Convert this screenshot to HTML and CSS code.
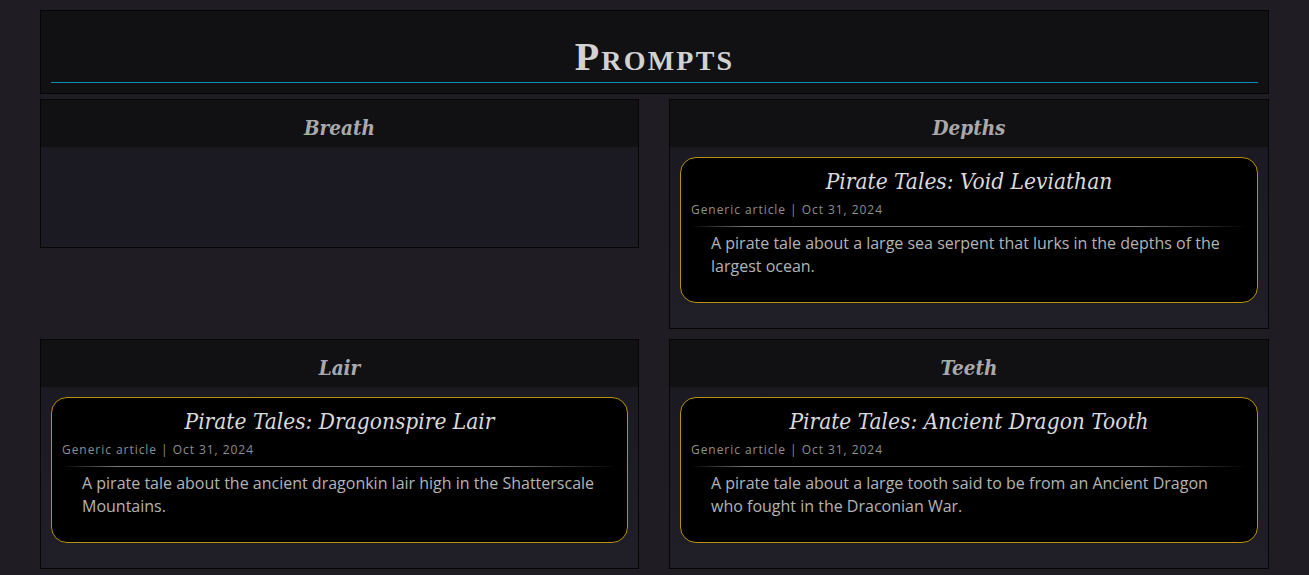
FILE: index.html
```html
<!DOCTYPE html>
<html lang="en">
<head>
<meta charset="utf-8">
<title>Prompts</title>
<link rel="stylesheet" href="styles.css">
</head>
<body>
<main class="page">
  <header class="page-header">
    <h1 class="page-title">Prompts</h1>
  </header>
  <section class="grid">
    <div class="panel">
      <h2 class="panel-title">Breath</h2>
      <div class="panel-body empty"></div>
    </div>
    <div class="panel">
      <h2 class="panel-title">Depths</h2>
      <div class="panel-body">
        <article class="article">
          <h3 class="article-title">Pirate Tales: Void Leviathan</h3>
          <div class="meta">Generic article | Oct 31, 2024</div>
          <div class="divider"></div>
          <p class="desc">A pirate tale about a large sea serpent that lurks in the depths of the largest ocean.</p>
        </article>
      </div>
    </div>
    <div class="panel">
      <h2 class="panel-title">Lair</h2>
      <div class="panel-body">
        <article class="article">
          <h3 class="article-title">Pirate Tales: Dragonspire Lair</h3>
          <div class="meta">Generic article | Oct 31, 2024</div>
          <div class="divider"></div>
          <p class="desc">A pirate tale about the ancient dragonkin lair high in the Shatterscale Mountains.</p>
        </article>
      </div>
    </div>
    <div class="panel">
      <h2 class="panel-title">Teeth</h2>
      <div class="panel-body">
        <article class="article">
          <h3 class="article-title">Pirate Tales: Ancient Dragon Tooth</h3>
          <div class="meta">Generic article | Oct 31, 2024</div>
          <div class="divider"></div>
          <p class="desc">A pirate tale about a large tooth said to be from an Ancient Dragon who fought in the Draconian War.</p>
        </article>
      </div>
    </div>
  </section>
</main>
</body>
</html>
```
FILE: styles.css
```css
* { box-sizing: border-box; }
html, body { margin: 0; padding: 0; }
body {
  background: #1f1d23;
  font-family: "Open Sans", "Noto Sans", sans-serif;
  color: #b0b0b0;
}
.page {
  width: 1229px;
  margin: 0 auto;
  padding-top: 10px;
}
.page-header {
  background: #111114;
  border: 1px solid #050506;
  padding: 10px;
}
.page-title {
  margin: 0;
  font-family: "Liberation Serif", serif;
  font-variant: small-caps;
  font-weight: bold;
  font-size: 40px;
  letter-spacing: 2.2px;
  color: #d2d2d2;
  text-align: center;
  line-height: 40px;
  padding-top: 16px;
  padding-bottom: 5px;
  border-bottom: 1px solid #0a8db2;
}
.grid {
  display: grid;
  grid-template-columns: 599px 600px;
  column-gap: 30px;
  row-gap: 10px;
  align-items: start;
  margin-top: 5px;
}
.panel {
  border: 1px solid #060607;
  background: #1c1b23;
}
.panel-title {
  margin: 0;
  background: #111114;
  height: 47px;
  padding-top: 14px;
  text-align: center;
  font-family: "DejaVu Serif Condensed", "DejaVu Serif", serif;
  font-style: italic;
  font-weight: bold;
  font-size: 20.5px;
  line-height: 28px;
  color: #a9a9ab;
}
.panel-body {
  padding: 10px 10px 25px;
  background: linear-gradient(180deg, #1b1a22 0%, #201f27 100%);
}
.panel-body.empty {
  height: 100px;
  padding: 0;
  background: #1b1a23;
}
.article {
  background: #000;
  border: 1px solid #b4920c;
  border-radius: 16px;
  padding: 9px 10px 10px;
}
.article-title {
  margin: 0;
  text-align: center;
  font-family: "DejaVu Serif Condensed", "DejaVu Serif", serif;
  font-style: italic;
  font-weight: normal;
  font-size: 22.5px;
  line-height: 28px;
  color: #dadadc;
}
.meta {
  margin-top: 6px;
  font-size: 12px;
  line-height: 18px;
  letter-spacing: 0.95px;
  color: #8c8f94;
}
.divider {
  height: 1px;
  margin-top: 7px;
  background: linear-gradient(90deg, rgba(120,120,120,0) 0%, #7a7a7a 10%, #7a7a7a 80%, rgba(120,120,120,0) 100%);
}
.desc {
  margin: 5px 0 14px;
  padding: 0 20px;
  font-size: 16px;
  line-height: 23px;
  color: #b4b4b6;
}
```
